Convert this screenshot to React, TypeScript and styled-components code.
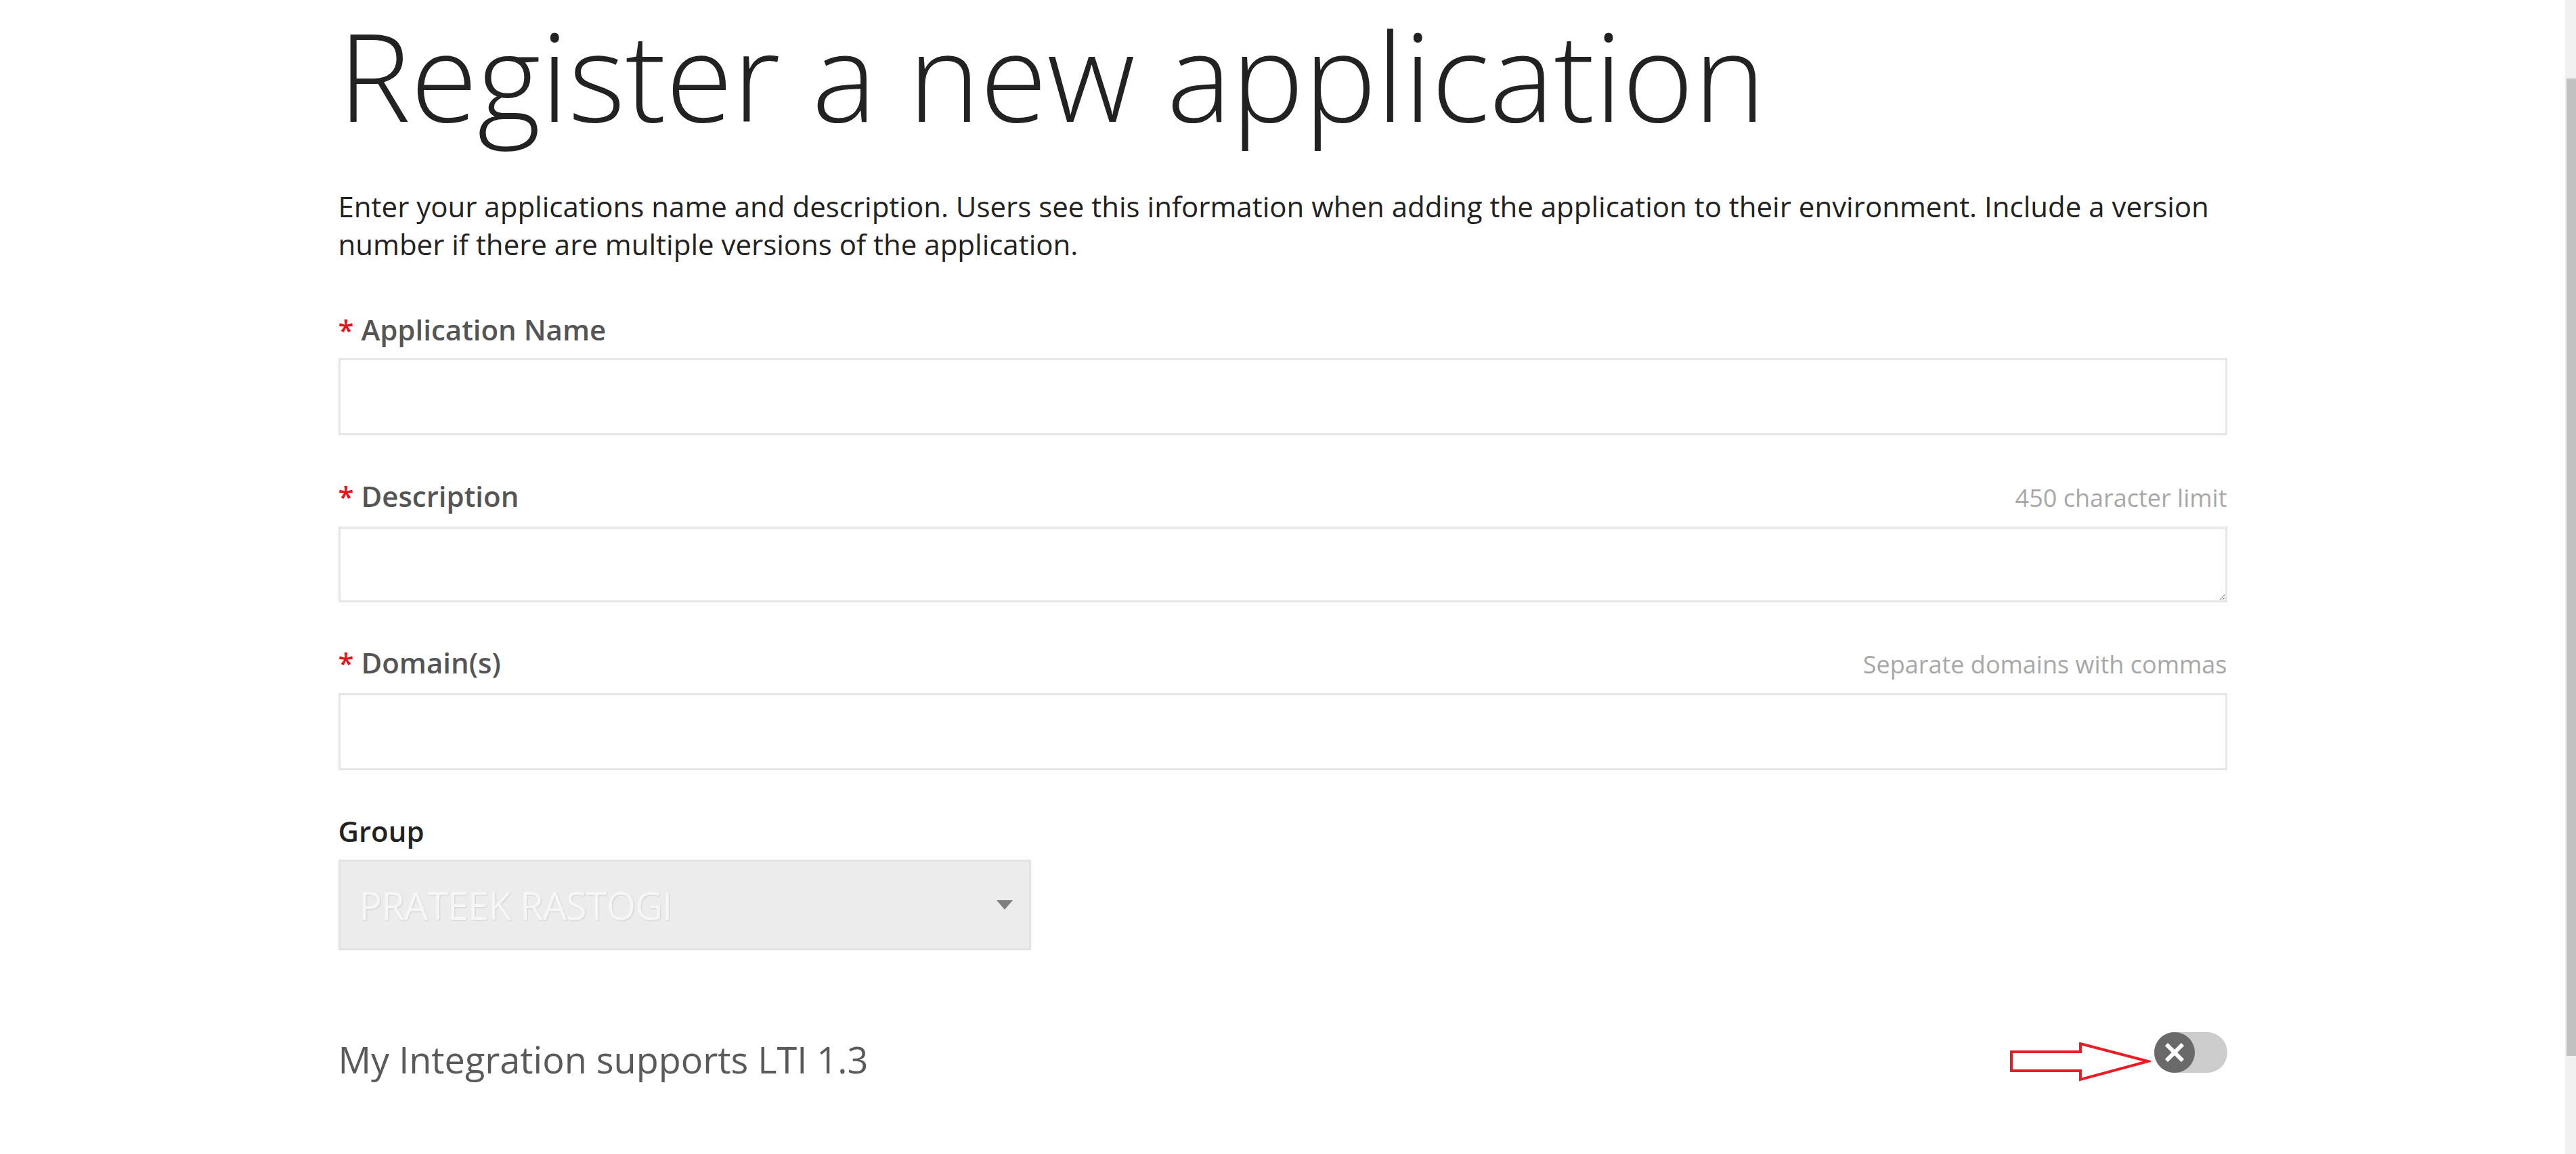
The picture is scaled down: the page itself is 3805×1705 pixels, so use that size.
import React from 'react'
import styled, { createGlobalStyle } from 'styled-components'

const GlobalStyle = createGlobalStyle`
  * {
    box-sizing: border-box;
  }
  body {
    margin: 0;
    background: #fff;
    font-family: 'Open Sans', 'Liberation Sans', sans-serif;
    color: #222;
  }
`

const Shell = styled.div`
  display: flex;
  height: 100vh;
  overflow: hidden;
`

const Page = styled.main`
  flex: 1;
  min-width: 0;
  padding-top: 11px;
`

const ScrollRail = styled.div`
  flex: 0 0 16px;
  height: 100%;
  padding: 116px 0 0 2px;
  background: #f0f0f0;
`

const ScrollThumb = styled.div`
  height: 1444px;
  background: #c1c1c1;
`

const Container = styled.div`
  width: 2790px;
  margin: 0 auto;
`

const Title = styled.h1`
  margin: 0;
  font-size: 180px;
  font-weight: 300;
  line-height: 200px;
  color: #222;
`

const Intro = styled.p`
  margin: 66px 0 0;
  font-size: 42px;
  line-height: 56px;
  color: #222;
`

const Form = styled.form`
  display: flex;
  flex-direction: column;
  margin-top: 69px;
`

const Field = styled.div`
  margin-bottom: 60.5px;
`

const LabelRow = styled.div`
  display: flex;
  justify-content: space-between;
  align-items: baseline;
  margin-bottom: 14px;
`

const Label = styled.label<{ $dark?: boolean }>`
  font-size: 42px;
  font-weight: 600;
  line-height: 57px;
  color: ${(p) => (p.$dark ? '#222' : '#555')};
`

const Required = styled.span`
  color: #e4141b;
`

const Hint = styled.span`
  font-size: 36px;
  line-height: 57px;
  color: #a8a8a8;
`

const TextInput = styled.input`
  display: block;
  width: 100%;
  height: 114px;
  margin: 0;
  padding: 0 30px;
  border: 3px solid #e6e6e6;
  background: #fff;
  font-family: inherit;
  font-size: 42px;
  outline: none;
`

const TextArea = styled.textarea`
  display: block;
  width: 100%;
  height: 112px;
  margin: 0;
  padding: 20px 30px;
  border: 3px solid #e6e6e6;
  background: #fff;
  font-family: inherit;
  font-size: 42px;
  resize: vertical;
  outline: none;
`

const Select = styled.div`
  display: flex;
  align-items: center;
  justify-content: space-between;
  width: 1023px;
  height: 134px;
  padding: 0 24px 0 28px;
  border: 3px solid #e2e2e2;
  background: #ececec;
`

const SelectValue = styled.span`
  font-size: 56px;
  letter-spacing: -1px;
  color: #f6f6f6;
  text-shadow: 1px 1px 2px rgba(0, 0, 0, 0.12);
`

const Caret = styled.span`
  width: 0;
  height: 0;
  border-left: 12px solid transparent;
  border-right: 12px solid transparent;
  border-top: 14px solid #808080;
`

const ToggleRow = styled.div`
  display: flex;
  justify-content: space-between;
  align-items: flex-start;
  margin-top: 61px;
`

const RowText = styled.span`
  font-size: 54px;
  line-height: 81px;
  color: #5a5a5a;
`

const SwitchGroup = styled.div`
  display: flex;
  align-items: flex-start;
  gap: 5px;
`

const Pointer = styled.svg`
  display: block;
  margin-top: 14.5px;
`

const Switch = styled.button`
  display: flex;
  width: 108px;
  height: 60px;
  padding: 0;
  border: none;
  border-radius: 30px;
  background: #ccc;
  cursor: pointer;
`

const Knob = styled.span`
  display: flex;
  align-items: center;
  justify-content: center;
  width: 60px;
  height: 60px;
  border-radius: 50%;
  background: #696969;
`

const fields = [
  { id: 'name', label: 'Application Name', hint: '', multi: false },
  { id: 'description', label: 'Description', hint: '450 character limit', multi: true },
  { id: 'domains', label: 'Domain(s)', hint: 'Separate domains with commas', multi: false },
]

const App = () => (
  <>
    <GlobalStyle />
    <Shell>
      <Page>
        <Container>
          <Title>Register a new application</Title>
          <Intro>
            Enter your applications name and description. Users see this information when adding the
            application to their environment. Include a version number if there are multiple versions of
            the application.
          </Intro>
          <Form onSubmit={(e) => e.preventDefault()}>
            {fields.map((f) => (
              <Field key={f.id}>
                <LabelRow>
                  <Label htmlFor={f.id}>
                    <Required>*</Required> {f.label}
                  </Label>
                  {f.hint && <Hint>{f.hint}</Hint>}
                </LabelRow>
                {f.multi ? <TextArea id={f.id} /> : <TextInput id={f.id} type="text" />}
              </Field>
            ))}
            <Field>
              <LabelRow>
                <Label $dark>Group</Label>
              </LabelRow>
              <Select>
                <SelectValue>PRATEEK RASTOGI</SelectValue>
                <Caret />
              </Select>
            </Field>
          </Form>
          <ToggleRow>
            <RowText>My Integration supports LTI 1.3</RowText>
            <SwitchGroup>
              <Pointer width="208" height="58" viewBox="0 0 208 58">
                <polygon
                  points="2,14 104,14 104,2 204,28 104,55 104,42 2,42"
                  fill="#fff"
                  stroke="#ed1c24"
                  strokeWidth="4"
                />
              </Pointer>
              <Switch type="button" aria-label="LTI 1.3 off">
                <Knob>
                  <svg width="28" height="28" viewBox="0 0 28 28">
                    <path d="M2 2 L26 26 M26 2 L2 26" stroke="#fff" strokeWidth="6" />
                  </svg>
                </Knob>
              </Switch>
            </SwitchGroup>
          </ToggleRow>
        </Container>
      </Page>
      <ScrollRail>
        <ScrollThumb />
      </ScrollRail>
    </Shell>
  </>
)

export default App
